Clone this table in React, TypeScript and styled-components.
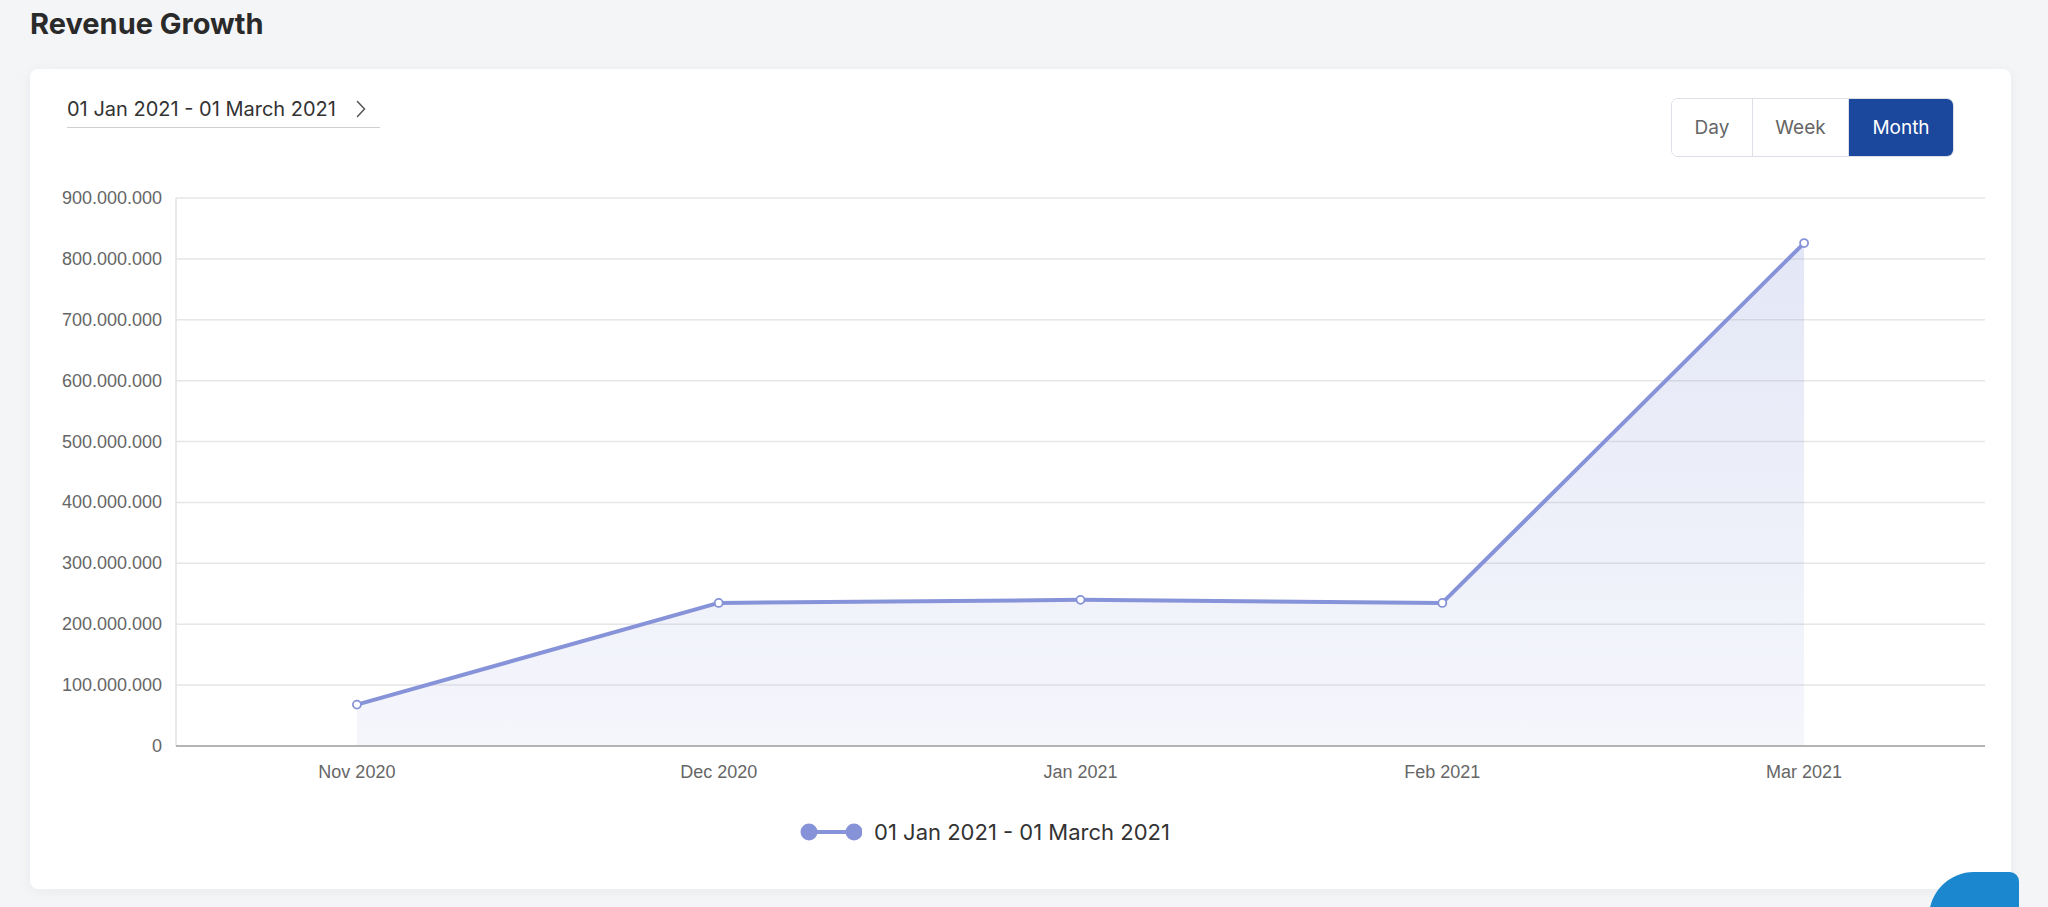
import styled, { createGlobalStyle } from 'styled-components';

const GlobalStyle = createGlobalStyle`
  body {
    margin: 0;
    background: #f4f5f7;
    font-family: Inter, 'Noto Sans', sans-serif;
    color: #2b2b2b;
  }
`;

const months = [
  { label: 'Nov 2020', value: 68 },
  { label: 'Dec 2020', value: 235 },
  { label: 'Jan 2021', value: 240 },
  { label: 'Feb 2021', value: 235 },
  { label: 'Mar 2021', value: 826 },
];

const ticks = [900, 800, 700, 600, 500, 400, 300, 200, 100, 0];

const LINE = '#8793d8';

// chart geometry (svg units == px at 2048 wide)
const W = 1981;
const H = 643;
const left = 146;
const right = 1955;
const top = 41;
const bottom = 589;
const band = (right - left) / months.length;
const xAt = (i: number) => left + band * (i + 0.5);
const yAt = (v: number) => bottom - ((bottom - top) * v) / 900;
const fmt = (v: number) => (v === 0 ? '0' : `${v}.000.000`);

const Chart = () => {
  const pts = months.map((m, i) => [xAt(i), yAt(m.value)]);
  const line = pts.map(([x, y], i) => `${i ? 'L' : 'M'}${x} ${y}`).join(' ');
  const area = `${line} L${pts[pts.length - 1][0]} ${bottom} L${pts[0][0]} ${bottom} Z`;
  return (
    <ChartSvg viewBox={`0 0 ${W} ${H}`} width={W} height={H}>
      <defs>
        <linearGradient id="fill" x1="0" y1={top} x2="0" y2={bottom} gradientUnits="userSpaceOnUse">
          <stop offset="0" stopColor="#8793d8" stopOpacity="0.24" />
          <stop offset="1" stopColor="#8793d8" stopOpacity="0.08" />
        </linearGradient>
      </defs>
      {ticks.map(t => (
        <g key={t}>
          {t !== 0 && <line x1={left} x2={right} y1={yAt(t)} y2={yAt(t)} stroke="#e6e6e6" strokeWidth="1.5" />}
          <text x={132} y={yAt(t) + 6} textAnchor="end" className="tick">
            {fmt(t)}
          </text>
        </g>
      ))}
      <line x1={left} x2={left} y1={top} y2={bottom} stroke="#e3e3e3" strokeWidth="1.5" />
      <path d={area} fill="url(#fill)" />
      <line x1={left} x2={right} y1={bottom} y2={bottom} stroke="#b4b4b4" strokeWidth="2" />
      <path d={line} fill="none" stroke={LINE} strokeWidth="4" strokeLinejoin="round" />
      {pts.map(([x, y], i) => (
        <circle key={i} cx={x} cy={y} r="4" fill="#fff" stroke={LINE} strokeWidth="1.8" />
      ))}
      {months.map((m, i) => (
        <text key={m.label} x={xAt(i)} y={621} textAnchor="middle" className="tick">
          {m.label}
        </text>
      ))}
    </ChartSvg>
  );
};

export default function App() {
  return (
    <Page>
      <GlobalStyle />
      <Title>Revenue Growth</Title>
      <Card>
        <Header>
          <DateRange>
            <span>01 Jan 2021 - 01 March 2021</span>
            <svg width="10" height="18" viewBox="0 0 10 18">
              <path d="M1.5 1.5 L8.5 9 L1.5 16.5" fill="none" stroke="#555" strokeWidth="1.5" strokeLinecap="round" />
            </svg>
          </DateRange>
          <Toggle>
            <Seg $w={80}>Day</Seg>
            <Seg $w={95}>Week</Seg>
            <Seg $w={104} $active>
              Month
            </Seg>
          </Toggle>
        </Header>
        <Chart />
        <Legend>
          <svg width="62" height="20" viewBox="0 0 62 20">
            <line x1="9" x2="54" y1="10" y2="10" stroke={LINE} strokeWidth="4" />
            <circle cx="9" cy="10" r="8.5" fill={LINE} />
            <circle cx="54" cy="10" r="8.5" fill={LINE} />
          </svg>
          <span>01 Jan 2021 - 01 March 2021</span>
        </Legend>
      </Card>
      <ChatBlob />
    </Page>
  );
}

const Page = styled.div`
  position: relative;
  height: 907px;
  overflow: hidden;
  padding: 0 37px 0 30px;
`;

const Title = styled.h2`
  margin: 0;
  height: 48px;
  line-height: 48px;
  font-size: 29px;
  font-weight: 700;
  color: #2a2a2a;
`;

const Card = styled.div`
  margin-top: 21px;
  height: 820px;
  background: #fff;
  border-radius: 8px;
  box-shadow: 0 2px 14px rgba(20, 30, 60, 0.05);
  display: flex;
  flex-direction: column;
`;

const Header = styled.div`
  display: flex;
  justify-content: space-between;
  align-items: flex-start;
  padding: 29px 57px 0 37px;
  height: 59px;
`;

const DateRange = styled.div`
  display: flex;
  align-items: center;
  justify-content: space-between;
  width: 313px;
  box-sizing: border-box;
  padding: 0 14px 7px 0;
  line-height: 22px;
  font-size: 20px;
  color: #333;
  border-bottom: 1.5px solid #cfcfcf;
`;

const Toggle = styled.div`
  display: flex;
  height: 59px;
  box-sizing: border-box;
  border: 1.5px solid #dcdfe6;
  border-radius: 7px;
  overflow: hidden;
`;

const Seg = styled.div<{ $w: number; $active?: boolean }>`
  width: ${p => p.$w}px;
  display: flex;
  align-items: center;
  justify-content: center;
  font-size: 19px;
  color: ${p => (p.$active ? '#fff' : '#666')};
  background: ${p => (p.$active ? '#1b479c' : '#fff')};
  & + & {
    border-left: 1.5px solid #dcdfe6;
  }
`;

const ChartSvg = styled.svg`
  display: block;
  .tick {
    font-family: 'Liberation Sans', Arial, sans-serif;
    font-size: 18px;
    fill: #666;
  }
`;

const Legend = styled.div`
  height: 64px;
  display: flex;
  align-items: center;
  justify-content: center;
  gap: 12px;
  padding-right: 71px;
  font-size: 22px;
  color: #333;
`;

const ChatBlob = styled.div`
  position: absolute;
  left: 1929px;
  top: 872px;
  width: 90px;
  height: 90px;
  background: #1a87cf;
  border-radius: 48px 10px 48px 48px;
`;
